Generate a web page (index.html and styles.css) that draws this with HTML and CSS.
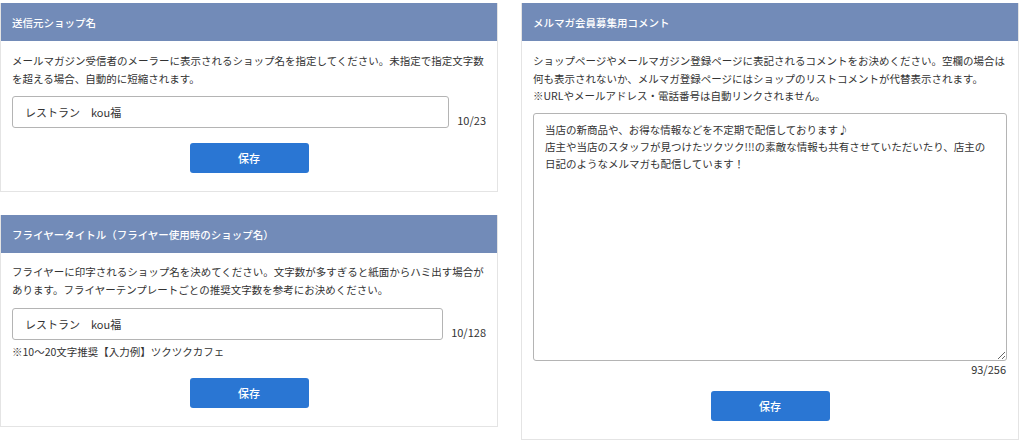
FILE: index.html
```html
<!DOCTYPE html>
<html lang="ja">
<head>
  <meta charset="UTF-8">
  <title>ショップ設定</title>
  <link rel="stylesheet" href="styles.css">
</head>
<body>
  <div class="page">
    <div class="column">
      <section class="panel">
        <h2 class="panel-title">送信元ショップ名</h2>
        <div class="panel-body">
          <p class="desc">メールマガジン受信者のメーラーに表示されるショップ名を指定してください。未指定で指定文字数を超える場合、自動的に短縮されます。</p>
          <div class="field-row">
            <input class="text-input" type="text" value="レストラン　kou福">
            <span class="counter">10/23</span>
          </div>
          <div class="actions">
            <button class="save-btn">保存</button>
          </div>
        </div>
      </section>

      <section class="panel">
        <h2 class="panel-title">フライヤータイトル（フライヤー使用時のショップ名）</h2>
        <div class="panel-body body-flyer">
          <p class="desc">フライヤーに印字されるショップ名を決めてください。文字数が多すぎると紙面からハミ出す場合があります。フライヤーテンプレートごとの推奨文字数を参考にお決めください。</p>
          <div class="field-row">
            <input class="text-input" type="text" value="レストラン　kou福">
            <span class="counter">10/128</span>
          </div>
          <p class="note">※10〜20文字推奨【入力例】ツクツクカフェ</p>
          <div class="actions">
            <button class="save-btn">保存</button>
          </div>
        </div>
      </section>
    </div>

    <div class="column">
      <section class="panel">
        <h2 class="panel-title">メルマガ会員募集用コメント</h2>
        <div class="panel-body">
          <p class="desc desc-wide">ショップページやメールマガジン登録ページに表記されるコメントをお決めください。空欄の場合は何も表示されないか、メルマガ登録ページにはショップのリストコメントが代替表示されます。<br>※URLやメールアドレス・電話番号は自動リンクされません。</p>
          <textarea class="comment-box">当店の新商品や、お得な情報などを不定期で配信しております♪
店主や当店のスタッフが見つけたツクツク!!!の素敵な情報も共有させていただいたり、店主の日記のようなメルマガも配信しています！</textarea>
          <div class="counter counter-right">93/256</div>
          <div class="actions actions-comment">
            <button class="save-btn">保存</button>
          </div>
        </div>
      </section>
    </div>
  </div>
</body>
</html>
```

FILE: styles.css
```css
body {
  margin: 0;
  padding: 3px 0 0 0;
  background-color: #fff;
  font-family: "Noto Sans CJK JP", "Noto Sans", sans-serif;
  color: #333;
}

.page {
  display: grid;
  grid-template-columns: 498px 498px;
  column-gap: 23px;
  align-items: start;
}

.column {
  display: flex;
  flex-direction: column;
  gap: 23px;
}

.panel {
  border: 1px solid #e4e4e4;
  border-top: none;
  background-color: #fff;
}

.panel-title {
  margin: 0;
  height: 38px;
  padding: 0 11px;
  display: flex;
  align-items: center;
  background-color: #728bb8;
  color: #fff;
  font-size: 10.5px;
  font-weight: 500;
}

.panel-body {
  padding: 11px 11px 18px 11px;
}

.body-flyer {
  padding-top: 10px;
}

.desc {
  margin: 0 0 8px 0;
  font-size: 10.5px;
  line-height: 18px;
}

.desc-wide {
  line-height: 17.5px;
  margin-bottom: 8px;
}

.body-flyer .desc {
  margin-bottom: 9px;
}

.field-row {
  display: flex;
  align-items: flex-end;
  gap: 8px;
}

.text-input {
  flex: 1;
  min-width: 0;
  height: 32px;
  box-sizing: border-box;
  padding: 0 12px;
  border: 1px solid #b4b4b4;
  border-radius: 3px;
  font-family: inherit;
  font-size: 11px;
  color: #333;
}

.counter {
  font-size: 11px;
  line-height: 16px;
  white-space: nowrap;
}

.counter-right {
  text-align: right;
  margin-right: 1px;
}

.note {
  margin: 3px 0 0 0;
  font-size: 10.5px;
  line-height: 18px;
}

.actions {
  display: flex;
  justify-content: center;
  margin-top: 15px;
}

.body-flyer .actions {
  margin-top: 17px;
}

.actions-comment {
  margin-top: 14px;
}

.save-btn {
  width: 119px;
  height: 30px;
  border: none;
  border-radius: 3px;
  background-color: #2a76d3;
  color: #fff;
  font-family: inherit;
  font-size: 11px;
  font-weight: 500;
  cursor: pointer;
}

.comment-box {
  display: block;
  width: 100%;
  height: 248px;
  box-sizing: border-box;
  padding: 7px 11px;
  border: 1px solid #b4b4b4;
  border-radius: 3px;
  font-family: inherit;
  font-size: 10.5px;
  line-height: 17px;
  color: #333;
}
```
